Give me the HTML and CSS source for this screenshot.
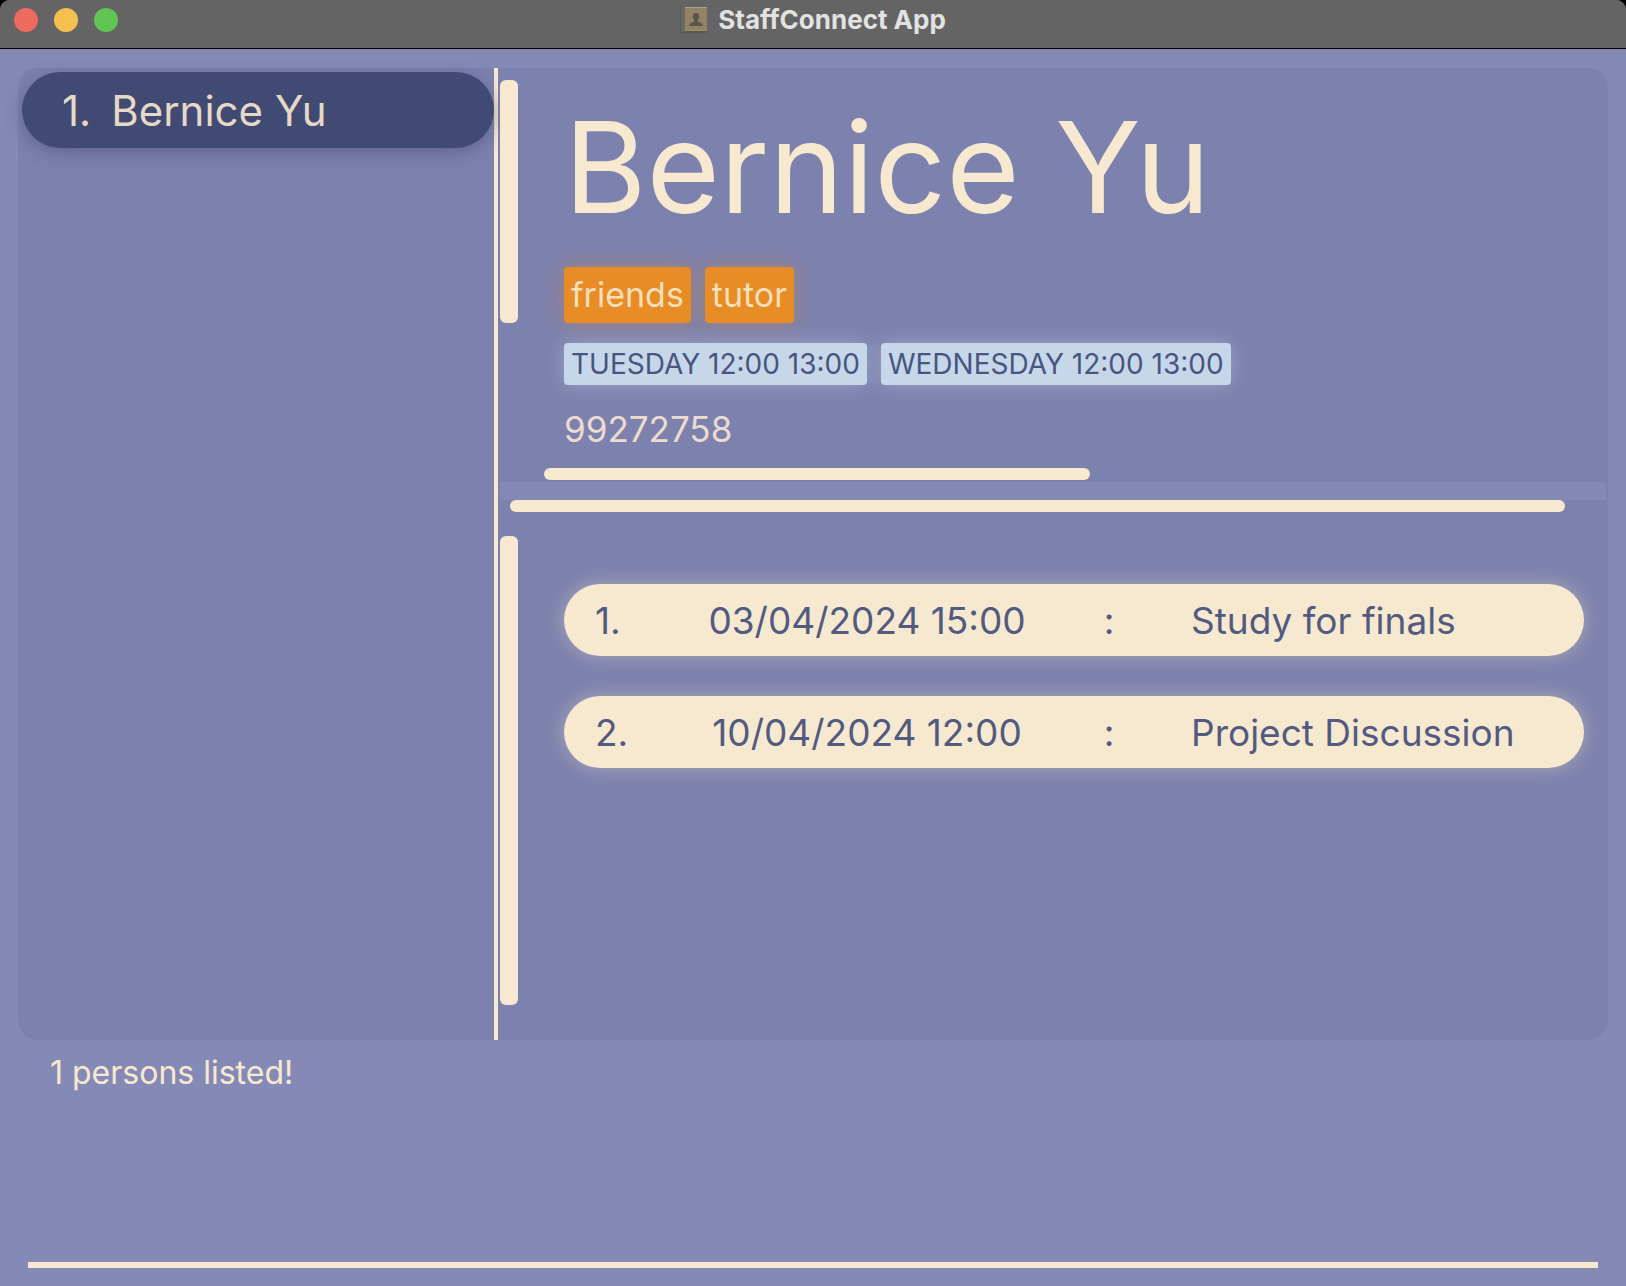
FILE: index.html
```html
<!DOCTYPE html>
<html lang="en">
<head>
<meta charset="utf-8">
<title>StaffConnect App</title>
<link rel="stylesheet" href="styles.css">
</head>
<body>
<div class="window">
  <header class="titlebar">
    <div class="lights">
      <button class="light light-close" aria-label="Close"></button>
      <button class="light light-minimise" aria-label="Minimise"></button>
      <button class="light light-zoom" aria-label="Zoom"></button>
    </div>
    <div class="app-title">
      <svg class="app-icon" viewBox="0 0 28 28" aria-hidden="true">
        <rect x="0" y="1" width="27" height="26" rx="2" fill="#5a5753"/>
        <rect x="1" y="1" width="4" height="25" fill="#6b6660"/>
        <rect x="5" y="1" width="22" height="24" rx="1" fill="#8f8265"/>
        <rect x="5" y="1" width="22" height="1" fill="#aaa18c"/>
        <rect x="5" y="24" width="22" height="1" fill="#a89158"/>
        <path d="M16 7c2.200 0 3.300 1.600 3.200 3.500-.1 1.500-.8 2.500-1.500 3.200v1.500c0 1.300 5.300 1.300 5.300 4.800H9c0-3.500 5.300-3.500 5.300-4.800v-1.500c-.7-.7-1.400-1.700-1.500-3.200C12.700 8.600 13.800 7 16 7z" fill="#5c544a"/>
      </svg>
      <span>StaffConnect App</span>
    </div>
  </header>

  <main class="content">
    <nav class="people" aria-label="Persons">
      <button class="person"><span class="person-index">1.</span><span>Bernice Yu</span></button>
    </nav>

    <div class="details">
      <section class="pane profile">
        <div class="track-y profile-track"><div class="thumb"></div></div>
        <div class="profile-body">
          <h1 class="name">Bernice Yu</h1>
          <ul class="chips">
            <li class="tag">friends</li>
            <li class="tag">tutor</li>
          </ul>
          <ul class="chips">
            <li class="slot">TUESDAY 12:00 13:00</li>
            <li class="slot">WEDNESDAY 12:00 13:00</li>
          </ul>
          <p class="phone">99272758</p>
        </div>
        <div class="track-x profile-bar"><div class="thumb"></div></div>
      </section>

      <section class="pane meetings">
        <div class="track-x meetings-bar"><div class="thumb"></div></div>
        <div class="track-y meetings-track"><div class="thumb"></div></div>
        <ol class="meeting-list">
          <li class="meeting">
            <span>1.</span><time class="when" datetime="2024-04-03T15:00">03/04/2024 15:00</time><span class="colon">:</span><span>Study for finals</span>
          </li>
          <li class="meeting">
            <span>2.</span><time class="when" datetime="2024-04-10T12:00">10/04/2024 12:00</time><span class="colon">:</span><span>Project Discussion</span>
          </li>
        </ol>
      </section>
    </div>
  </main>

  <footer class="console">
    <output class="result">1 persons listed!</output>
    <input class="command" type="text" aria-label="Command">
  </footer>
</div>
</body>
</html>
```
FILE: styles.css
```css
:root {
  --base: #8589b6;
  --panel: #7d81ad;
  --cream: #f7e9d0;
  --ink: #525a80;
}

* {
  box-sizing: border-box;
}

body {
  margin: 0;
  background: #000;
  font-family: Inter, "Liberation Sans", sans-serif;
  color: var(--cream);
}

h1, p, ul, ol {
  margin: 0;
  padding: 0;
  list-style: none;
  font-weight: 400;
}

.window {
  display: flex;
  flex-direction: column;
  min-height: 100vh;
  overflow: hidden;
  background: var(--base);
  border-radius: 10px 10px 0 0;
}

.titlebar {
  display: grid;
  grid-template-columns: 1fr auto 1fr;
  align-items: center;
  height: 49px;
  padding: 0 14px 9px;
  background: #646464;
  border-bottom: 1px solid #000;
}

.lights {
  display: flex;
  gap: 16px;
}

.light {
  width: 24px;
  height: 24px;
  padding: 0;
  border: 0;
  border-radius: 50%;
}

.light-close { background: #ed6a5f; }
.light-minimise { background: #f5bf4f; }
.light-zoom { background: #61c554; }

.app-title {
  display: flex;
  align-items: center;
  gap: 10px;
  color: #e2e2e2;
  font-size: 26px;
  font-weight: 700;
  line-height: 32px;
}

.app-icon {
  width: 28px;
  height: 28px;
}

.content {
  flex: 1;
  display: grid;
  grid-template-columns: 16fr 37fr;
  margin: 19px 18px 0;
  background: var(--panel);
  border-radius: 20px;
}

.people {
  padding: 4px 0 0 4px;
  border-right: 4px solid var(--cream);
}

.person {
  display: flex;
  align-items: center;
  gap: 20px;
  width: 100%;
  height: 76px;
  padding: 0 40px;
  border: 0;
  border-radius: 38px;
  background: #414a73;
  box-shadow: 0 4px 16px rgba(65, 74, 115, 0.5);
  color: #e6d9c8;
  font: inherit;
  font-size: 42px;
}

.details {
  display: flex;
  flex-direction: column;
  padding: 0 2px;
}

.pane {
  display: grid;
  grid-template-columns: 18px 1fr;
}

.thumb {
  border-radius: 6px;
  background: var(--cream);
}

.track-x,
.track-y {
  display: grid;
}

.track-x {
  grid-column: 1 / -1;
  height: 12px;
}

.profile {
  padding-bottom: 2px;
}

.profile-track {
  grid-template-rows: 5fr 3fr;
  padding-top: 12px;
}

.profile-body {
  display: flex;
  flex-direction: column;
  gap: 20px;
  padding: 19px 22px 15px 46px;
}

.name {
  font-size: 126px;
  line-height: 160px;
}

.chips {
  display: flex;
  gap: 14px;
}

.tag,
.slot {
  padding: 0 7px;
  border-radius: 4px;
}

.tag {
  background: #e88c26;
  box-shadow: 0 0 20px rgba(232, 140, 38, 0.35);
  color: #f7dfba;
  font-size: 34px;
  line-height: 56px;
}

.slot {
  background: #c6d7ea;
  box-shadow: 0 0 20px rgba(198, 215, 234, 0.4);
  color: #48557f;
  font-size: 28px;
  line-height: 42px;
}

.phone {
  color: #ebdccf;
  font-size: 35px;
  line-height: 48px;
}

.profile-bar {
  grid-template-columns: 546fr 516fr;
  padding-left: 44px;
}

.meetings {
  flex: 1;
  grid-template-rows: 12px 1fr;
  border-top: 18px solid var(--base);
}

.meetings-bar {
  padding: 0 41px 0 10px;
}

.meetings-track {
  padding: 24px 0 35px;
}

.meeting-list {
  display: flex;
  flex-direction: column;
  gap: 40px;
  padding: 72px 22px 40px 46px;
}

.meeting {
  display: grid;
  grid-template-columns: 84px 376px 136px 1fr;
  align-items: center;
  height: 72px;
  padding: 0 30px 0 31px;
  border-radius: 36px;
  background: var(--cream);
  box-shadow: 0 0 20px rgba(247, 233, 208, 0.4);
  color: var(--ink);
  font-size: 37px;
}

.when,
.colon {
  text-align: center;
}

.colon {
  padding-right: 28px;
}

.console {
  display: flex;
  flex-direction: column;
  justify-content: space-between;
  height: 246px;
  padding: 12px 28px 18px;
}

.result {
  padding-left: 22px;
  font-size: 32px;
  line-height: 42px;
}

.command {
  width: 100%;
  height: 84px;
  padding: 0 22px;
  border: 0;
  border-bottom: 6px solid var(--cream);
  outline: 0;
  background: none;
  color: var(--cream);
  font: inherit;
  font-size: 32px;
}
```
